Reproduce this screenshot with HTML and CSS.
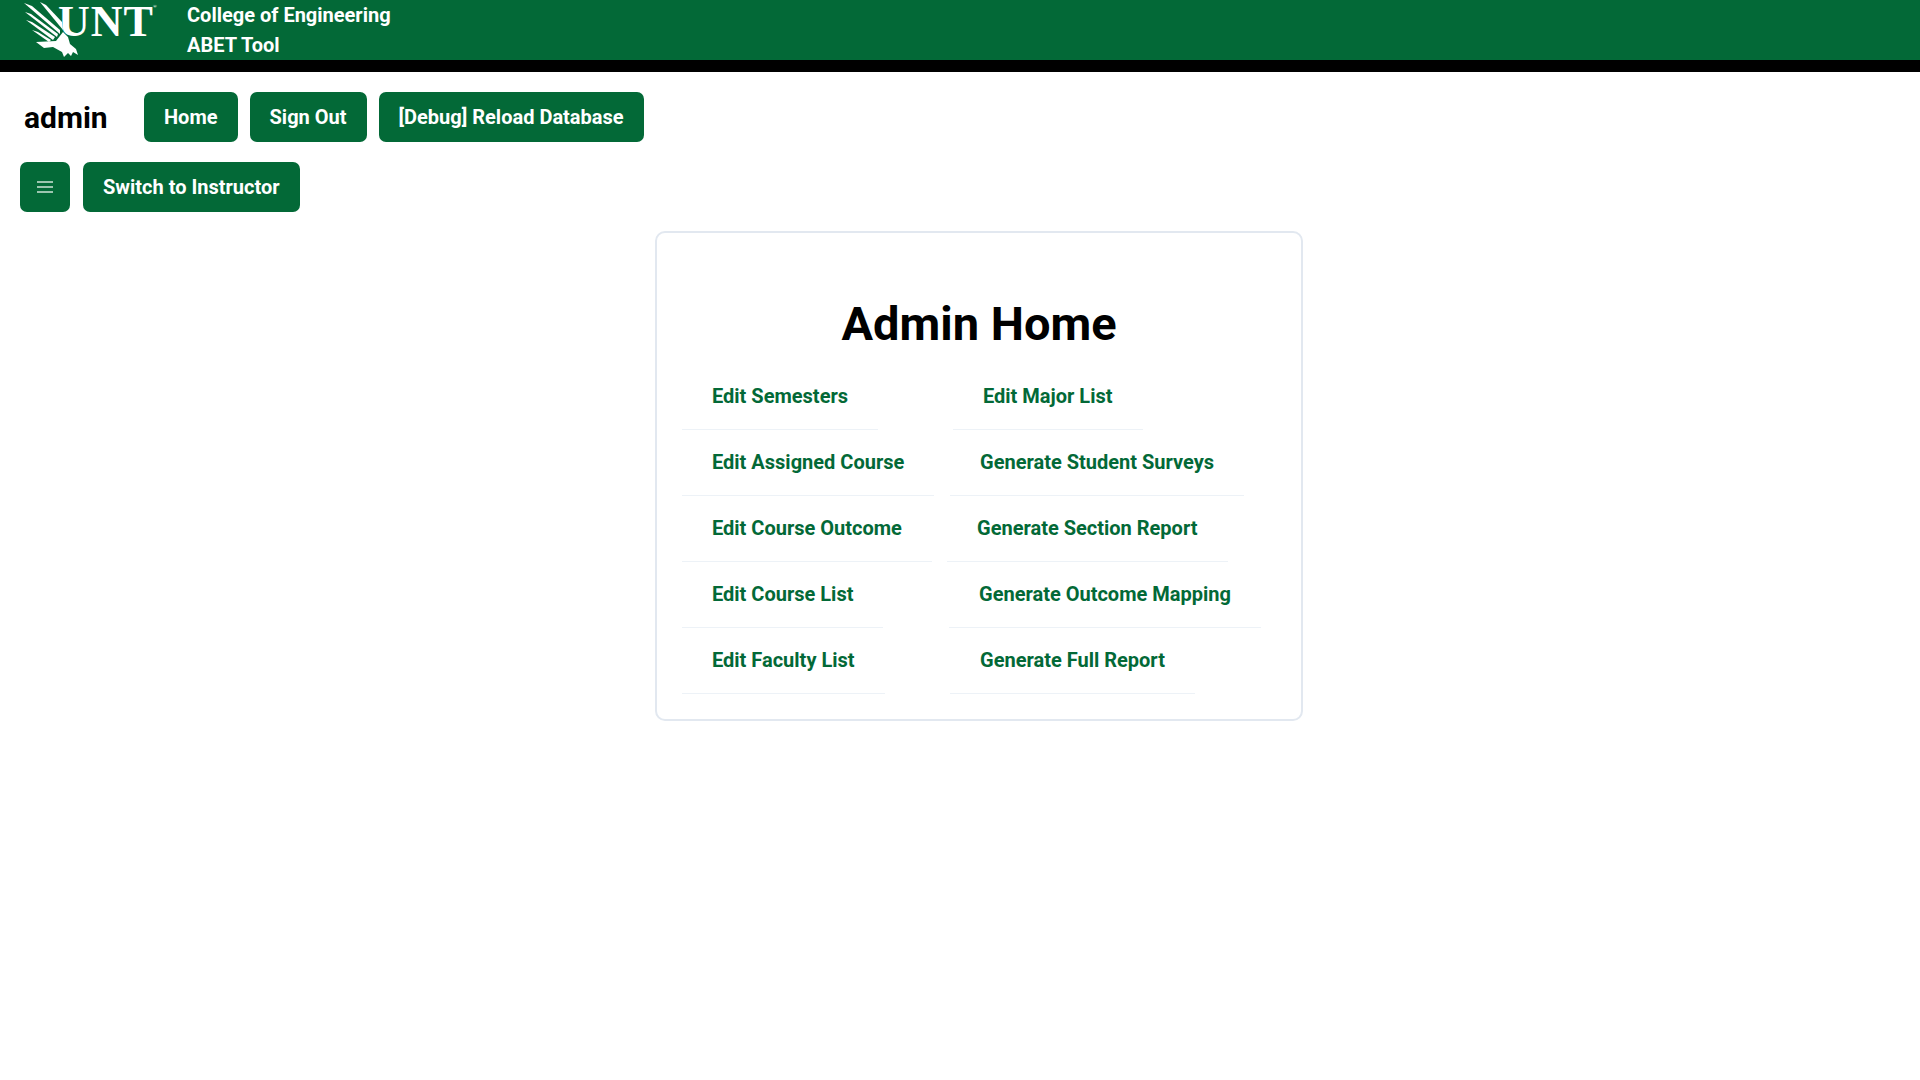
FILE: index.html
```html
<!DOCTYPE html>
<html lang="en">
<head>
    <meta charset="UTF-8">
    <meta name="viewport" content="width=device-width, initial-scale=1.0">
    <title>Admin Home</title>
    <link rel="stylesheet" href="styles.css">
</head>
<body>

    <header class="site-header">
        <div class="logo">
            <svg class="eagle" viewBox="0 0 60 60" aria-hidden="true">
                <path d="M20 2 L26 5 L42 22 L43 30 Z"/>
                <path d="M4 3 L12 6 L40 30 L40 34 Z"/>
                <path d="M5 12 L11 14 L38 34 L37 37 Z"/>
                <path d="M6 20 L12 22 L35 37 L33 40 Z"/>
                <path d="M12 30 L18 32 L31 40 L29 42 Z"/>
                <path d="M16 42 L36 41 L43 32 L48 37 L50 44 L56 49 L58 55 L53 52 L51 56 L48 53 L44 57 L42 52 L33 47 L24 48 Z"/>
            </svg>
            <span class="wordmark">UNT<span class="mark">®</span></span>
        </div>
        <div class="header-text">
            <div>College of Engineering</div>
            <div>ABET Tool</div>
        </div>
    </header>

    <div class="toolbar">
        <span class="username">admin</span>
        <button class="btn">Home</button>
        <button class="btn">Sign Out</button>
        <button class="btn">[Debug] Reload Database</button>
    </div>

    <div class="toolbar second">
        <button class="btn menu-btn" aria-label="Menu">
            <svg width="16" height="12" viewBox="0 0 16 12"><path d="M0 1H16M0 6H16M0 11H16" stroke="#cfe3d7" stroke-width="1.6"/></svg>
        </button>
        <button class="btn">Switch to Instructor</button>
    </div>

    <main class="card">
        <h1>Admin Home</h1>
        <div class="link-grid">
            <a class="link">Edit Semesters</a>
            <a class="link nudge-4">Edit Major List</a>
            <a class="link">Edit Assigned Course</a>
            <a class="link nudge-1">Generate Student Surveys</a>
            <a class="link">Edit Course Outcome</a>
            <a class="link nudge-back">Generate Section Report</a>
            <a class="link">Edit Course List</a>
            <a class="link">Generate Outcome Mapping</a>
            <a class="link">Edit Faculty List</a>
            <a class="link nudge-1">Generate Full Report</a>
        </div>
    </main>

</body>
</html>
```

FILE: styles.css
```css
body {
    margin: 0;
    font-family: Roboto, "Liberation Sans", sans-serif;
    background-color: #fff;
    color: #000;
}
.site-header {
    display: flex;
    height: 60px;
    background-color: #036937;
    border-bottom: 12px solid #000;
    color: #fff;
}
.logo {
    display: flex;
    width: 187px;
    padding-left: 20px;
    box-sizing: border-box;
}
.eagle {
    width: 60px;
    height: 60px;
    fill: #fff;
    flex-shrink: 0;
}
.wordmark {
    margin-left: -22px;
    font-family: "Liberation Serif", serif;
    font-size: 44px;
    font-weight: 700;
    line-height: 44px;
    letter-spacing: 1px;
    height: 44px;
    white-space: nowrap;
}
.mark {
    display: inline-block;
    vertical-align: top;
    margin: 4px 0 0 -1px;
    font-size: 5px;
    line-height: 5px;
    letter-spacing: 0;
}
.header-text {
    font-size: 20px;
    font-weight: 700;
    line-height: 30px;
}
.toolbar {
    display: flex;
    align-items: center;
    gap: 12px;
    margin: 20px 20px 0 24px;
}
.toolbar.second {
    margin-left: 20px;
    gap: 13px;
}
.username {
    width: 108px;
    font-size: 30px;
    font-weight: 700;
}
.btn {
    height: 50px;
    padding: 0 20px;
    background-color: #036937;
    color: #fff;
    border: none;
    border-radius: 7px;
    font-family: inherit;
    font-size: 20px;
    font-weight: 700;
    cursor: pointer;
}
.menu-btn {
    width: 50px;
    padding: 0;
    display: flex;
    align-items: center;
    justify-content: center;
}
.card {
    width: 648px;
    box-sizing: border-box;
    margin: 19px 0 0 655px;
    padding: 0 25px 25px;
    border: 2px solid #e2e8f0;
    border-radius: 10px;
}
.card h1 {
    margin: 54px 0 4px;
    text-align: center;
    font-size: 47px;
    font-weight: 700;
    line-height: 73px;
}
.link-grid {
    display: grid;
    grid-template-columns: 267px 1fr;
    grid-auto-rows: 66px;
}
.link {
    justify-self: start;
    padding: 0 30px;
    font-size: 20px;
    font-weight: 700;
    line-height: 64px;
    color: #036937;
    border-bottom: 1px solid #edf2f7;
    cursor: pointer;
}
.nudge-4 {
    margin-left: 4px;
}
.nudge-1 {
    margin-left: 1px;
}
.nudge-back {
    margin-left: -2px;
}
```
